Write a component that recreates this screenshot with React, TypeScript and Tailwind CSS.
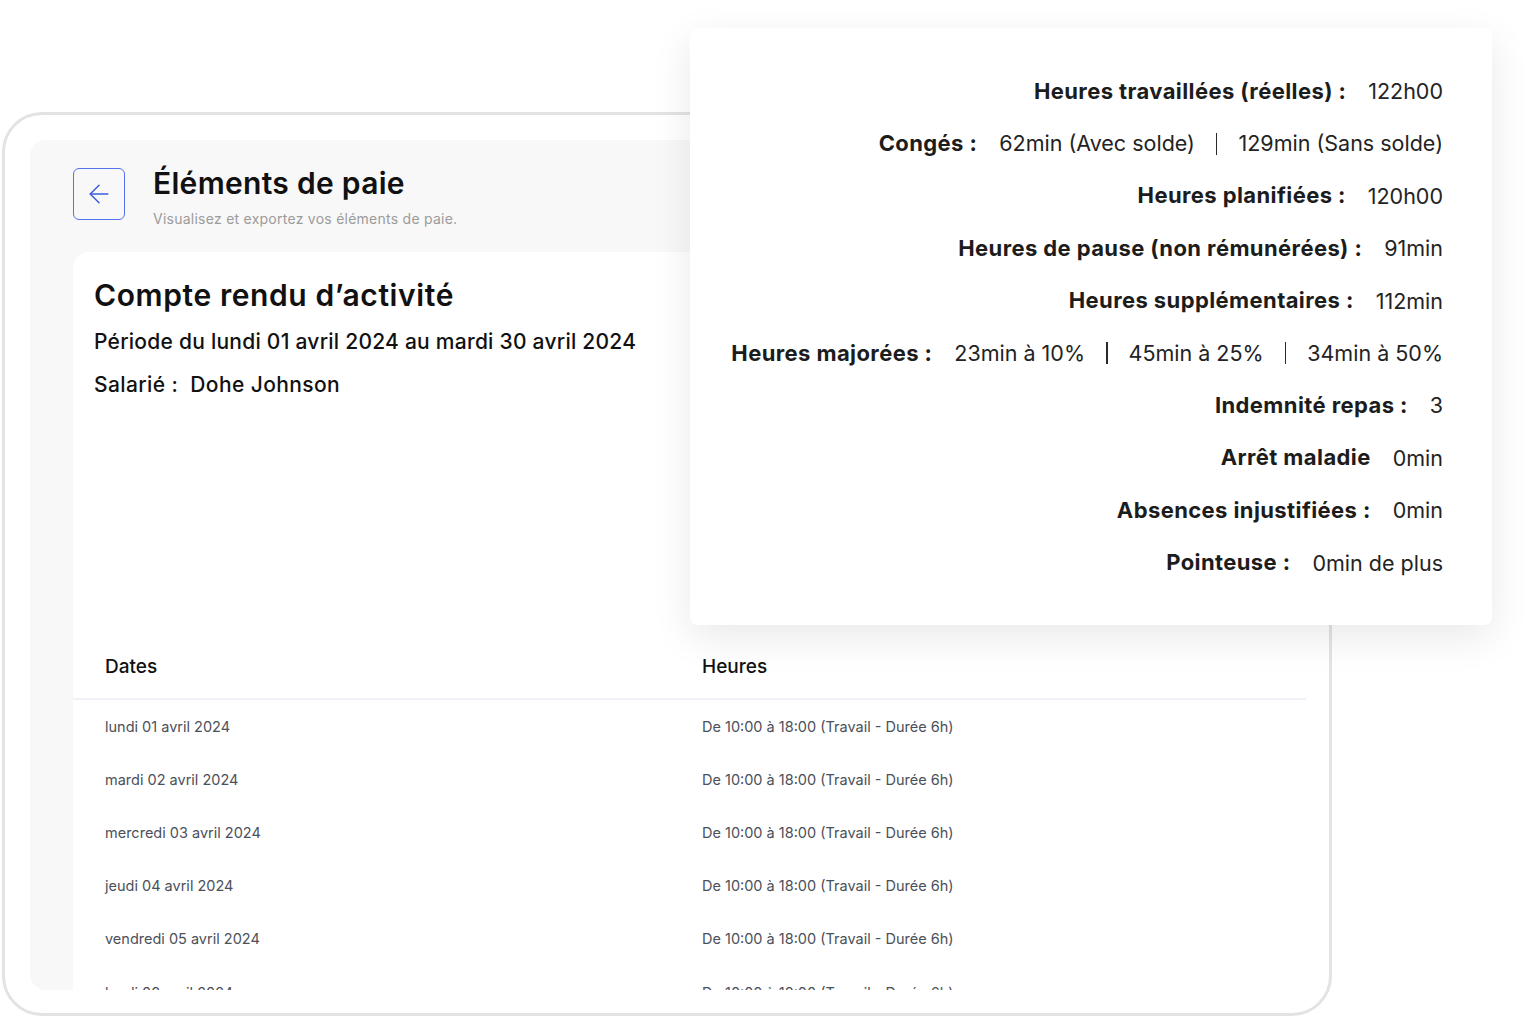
import { ArrowLeft } from "lucide-react";

const DAYS = [
  "lundi 01 avril 2024",
  "mardi 02 avril 2024",
  "mercredi 03 avril 2024",
  "jeudi 04 avril 2024",
  "vendredi 05 avril 2024",
  "lundi 08 avril 2024",
];

type Row = { label: string; values: string[] };

const SUMMARY: Row[] = [
  { label: "Heures travaillées (réelles) :", values: ["122h00"] },
  { label: "Congés :", values: ["62min (Avec solde)", "129min (Sans solde)"] },
  { label: "Heures planifiées :", values: ["120h00"] },
  { label: "Heures de pause (non rémunérées) :", values: ["91min"] },
  { label: "Heures supplémentaires :", values: ["112min"] },
  { label: "Heures majorées :", values: ["23min à 10%", "45min à 25%", "34min à 50%"] },
  { label: "Indemnité repas :", values: ["3"] },
  { label: "Arrêt maladie", values: ["0min"] },
  { label: "Absences injustifiées :", values: ["0min"] },
  { label: "Pointeuse :", values: ["0min de plus"] },
];

function SummaryCard() {
  return (
    <div className="absolute left-[690px] top-[28px] h-[597px] w-[802px] rounded-lg bg-white shadow-[0_12px_40px_rgba(0,0,0,0.09)]">
      <div className="flex flex-col items-end pr-[49px] pt-[37px]">
        {SUMMARY.map((r) => (
          <div key={r.label} className="flex h-[52.4px] items-center gap-[22px]">
            <span className="text-[22px] font-bold tracking-[0.4px] text-[#1c1c1c]">{r.label}</span>
            <span className="flex items-center gap-[21px] text-[21.5px] text-[#232323]">
              {r.values.map((v, i) => (
                <span key={v} className="flex items-center gap-[21px]">
                  {i > 0 && <span className="h-[22px] w-[1.5px] bg-[#2a2a2a]" />}
                  {v}
                </span>
              ))}
            </span>
          </div>
        ))}
      </div>
    </div>
  );
}

export default function App() {
  return (
    <div className="relative h-[1016px] w-[1527px] overflow-hidden bg-white font-['Inter',sans-serif]">
      <div className="ml-[2px] mt-[112px] h-[904px] w-[1330px] rounded-[40px] border-[3px] border-[#e3e3e3] pb-[23px] pl-[25px] pr-[23px] pt-[25px]">
        <div className="flex h-full flex-col overflow-hidden rounded-2xl bg-[#f8f8f8]">
          {/* page header */}
          <div className="flex h-[112px] shrink-0 items-start pl-[43px] pt-[28px]">
            <button className="flex h-[52px] w-[52px] items-center justify-center rounded-md border-[1.5px] border-[#5672f0] text-[#3d5ce0]">
              <ArrowLeft size={30} strokeWidth={1.2} />
            </button>
            <div className="ml-[28px]">
              <h1 className="mt-[-5px] text-[30px] font-semibold leading-[40px] tracking-[0.3px] text-[#111]">Éléments de paie</h1>
              <p className="mt-[5px] text-[14px] tracking-[0.25px] text-[#9b9b9b]">Visualisez et exportez vos éléments de paie.</p>
            </div>
          </div>

          {/* report card */}
          <div className="ml-[43px] flex-1 rounded-tl-2xl bg-white">
            <div className="pl-[21px] pt-[25px]">
              <h2 className="text-[30px] font-semibold leading-[36px] tracking-[0.6px] text-[#111]">Compte rendu d’activité</h2>
              <p className="mt-[17px] text-[21px] font-medium leading-[24px] tracking-[0.25px] text-[#111]">
                Période du lundi 01 avril 2024 au mardi 30 avril 2024
              </p>
              <p className="mt-[19px] text-[21px] font-medium leading-[24px] tracking-[0.4px] text-[#111]">
                Salarié :&nbsp; Dohe Johnson
              </p>
            </div>

            <div className="mt-[239px]">
              <div className="grid h-[64px] grid-cols-[597px_1fr] items-center border-b-2 border-[#eff1f9] text-[19px] font-medium text-[#111]">
                <span className="pl-[32px]">Dates</span>
                <span className="pl-[32px]">Heures</span>
              </div>
              {DAYS.map((d) => (
                <div key={d} className="grid h-[53.2px] grid-cols-[597px_1fr] items-center text-[14.5px] text-[#4b5059]">
                  <span className="pl-[32px]">{d}</span>
                  <span className="pl-[32px]">De 10:00 à 18:00 (Travail - Durée 6h)</span>
                </div>
              ))}
            </div>
          </div>
        </div>
      </div>
      <SummaryCard />
    </div>
  );
}
